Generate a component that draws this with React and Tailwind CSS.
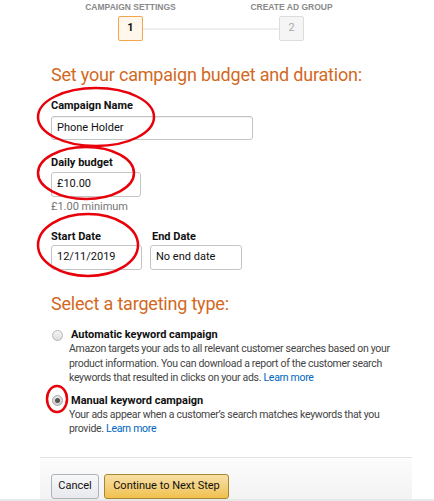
export default function App() {
  const font = { fontFamily: 'Roboto, "Liberation Sans", Arial, sans-serif' };
  const stepFont = { fontFamily: '"Liberation Sans", Arial, sans-serif' };

  return (
    <div className="relative w-[434px] h-[501px] bg-white overflow-hidden" style={font}>
      {/* steps */}
      <div className="flex pl-[50px] pt-[1px]" style={stepFont}>
        <div className="w-[161px] text-center text-[8.5px] leading-[12px] font-bold text-[#8a8a8a] uppercase">Campaign settings</div>
        <div className="w-[161px] text-center text-[8.5px] leading-[12px] font-bold text-[#8a8a8a] uppercase">Create ad group</div>
      </div>
      <div className="flex items-center ml-[118px] mt-[3px]">
        <div className="w-[25px] h-[25px] rounded-[2px] border border-[#f5a54e] bg-[#fff6ec] flex items-center justify-center text-[11px] font-bold text-[#111]">1</div>
        <div className="w-[136px] h-[2px] bg-[#eeeeee]"></div>
        <div className="w-[25px] h-[25px] rounded-[2px] border border-[#dddddd] bg-[#f5f5f6] flex items-center justify-center text-[11px] text-[#aaaaaa]">2</div>
      </div>

      <div className="pl-[51px]">
        <h1 className="mt-[23px] text-[18px] leading-[22px] tracking-[-0.2px] text-[#d2691e]">Set your campaign budget and duration:</h1>

        <div className="mt-[13px] text-[11px] leading-[14px] font-bold text-[#111]">Campaign Name</div>
        <div className="mt-[3px] w-[202px] h-[24px] rounded-[3px] border border-[#c4c4c4] shadow-[inset_0_1px_0_rgba(0,0,0,0.06)] px-[5px] flex items-center text-[11px] text-[#111]">Phone Holder</div>

        <div className="mt-[16px] text-[11px] leading-[14px] font-bold text-[#111]">Daily budget</div>
        <div className="mt-[2px] w-[90px] h-[25px] rounded-[3px] border border-[#c4c4c4] px-[5px] flex items-center text-[11px] text-[#111]">£10.00</div>
        <div className="mt-[3px] text-[11px] leading-[14px] text-[#767676]">£1.00 minimum</div>

        <div className="mt-[16px] flex gap-[8px]">
          <div>
            <div className="text-[11px] leading-[14px] font-bold text-[#111]">Start Date</div>
            <div className="mt-[1px] w-[91px] h-[25px] rounded-[3px] border border-[#c4c4c4] px-[5px] flex items-center text-[11px] text-[#111]">12/11/2019</div>
          </div>
          <div>
            <div className="pl-[2px] text-[11px] leading-[14px] font-bold text-[#111]">End Date</div>
            <div className="mt-[1px] w-[92px] h-[25px] rounded-[3px] border border-[#c4c4c4] px-[5px] flex items-center text-[11px] text-[#111]">No end date</div>
          </div>
        </div>

        <h2 className="mt-[23px] text-[18px] leading-[22px] tracking-[-0.2px] text-[#d2691e]">Select a targeting type:</h2>

        <div className="mt-[13px]">
          <div className="flex items-center">
            <span className="ml-[1px] mr-[8px] w-[11px] h-[11px] rounded-full border border-[#b5b5b5] bg-gradient-to-b from-[#f4f4f4] to-[#dcdcdc]"></span>
            <span className="text-[11px] leading-[14px] font-bold text-[#111]">Automatic keyword campaign</span>
          </div>
          <p className="pl-[18px] w-[353px] text-[10.5px] leading-[14.5px] tracking-[-0.3px] text-[#444]">
            Amazon targets your ads to all relevant customer searches based on your product information. You can download a report of the customer search keywords that resulted in clicks on your ads. <span className="text-[#0066c0]">Learn more</span>
          </p>
        </div>

        <div className="mt-[8px]">
          <div className="flex items-center">
            <span className="ml-[1px] mr-[8px] w-[11px] h-[11px] rounded-full border border-[#a5a5a5] bg-gradient-to-b from-[#e6e6e6] to-[#cfcfcf] flex items-center justify-center">
              <span className="w-[5px] h-[5px] rounded-full bg-[#555]"></span>
            </span>
            <span className="text-[11px] leading-[14px] font-bold text-[#111]">Manual keyword campaign</span>
          </div>
          <p className="pl-[18px] w-[353px] text-[10.5px] leading-[14.5px] tracking-[-0.3px] text-[#444]">
            Your ads appear when a customer’s search matches keywords that you provide. <span className="text-[#0066c0]">Learn more</span>
          </p>
        </div>
      </div>

      {/* footer */}
      <div className="mt-[20px] ml-[40px] w-[372px] h-[42px] border-t border-[#e3e3e3] bg-gradient-to-b from-[#fcfcfc] to-[#f3f3f3] pl-[11px] pt-[16px] flex gap-[5px]">
        <button className="w-[48px] h-[25px] rounded-[3px] border border-[#adb1b8] bg-gradient-to-b from-[#f7f8fa] to-[#e7e9ec] text-[11px] text-[#111]">Cancel</button>
        <button className="w-[125px] h-[25px] rounded-[3px] border border-[#a88734] bg-gradient-to-b from-[#f7dfa5] to-[#f0c14b] text-[11px] text-[#111]">Continue to Next Step</button>
      </div>
      <div className="h-[4px] bg-[#e8e8e8]"></div>

      {/* annotation marks */}
      <svg className="absolute inset-0 pointer-events-none" width="434" height="501">
        <g fill="none" stroke="#e8000b" strokeWidth="2.5">
          <ellipse cx="96" cy="117" rx="58" ry="29" />
          <ellipse cx="86" cy="173" rx="48" ry="26" />
          <ellipse cx="88" cy="245" rx="50" ry="31" />
          <ellipse cx="57" cy="399" rx="10" ry="13" />
        </g>
      </svg>
    </div>
  );
}
